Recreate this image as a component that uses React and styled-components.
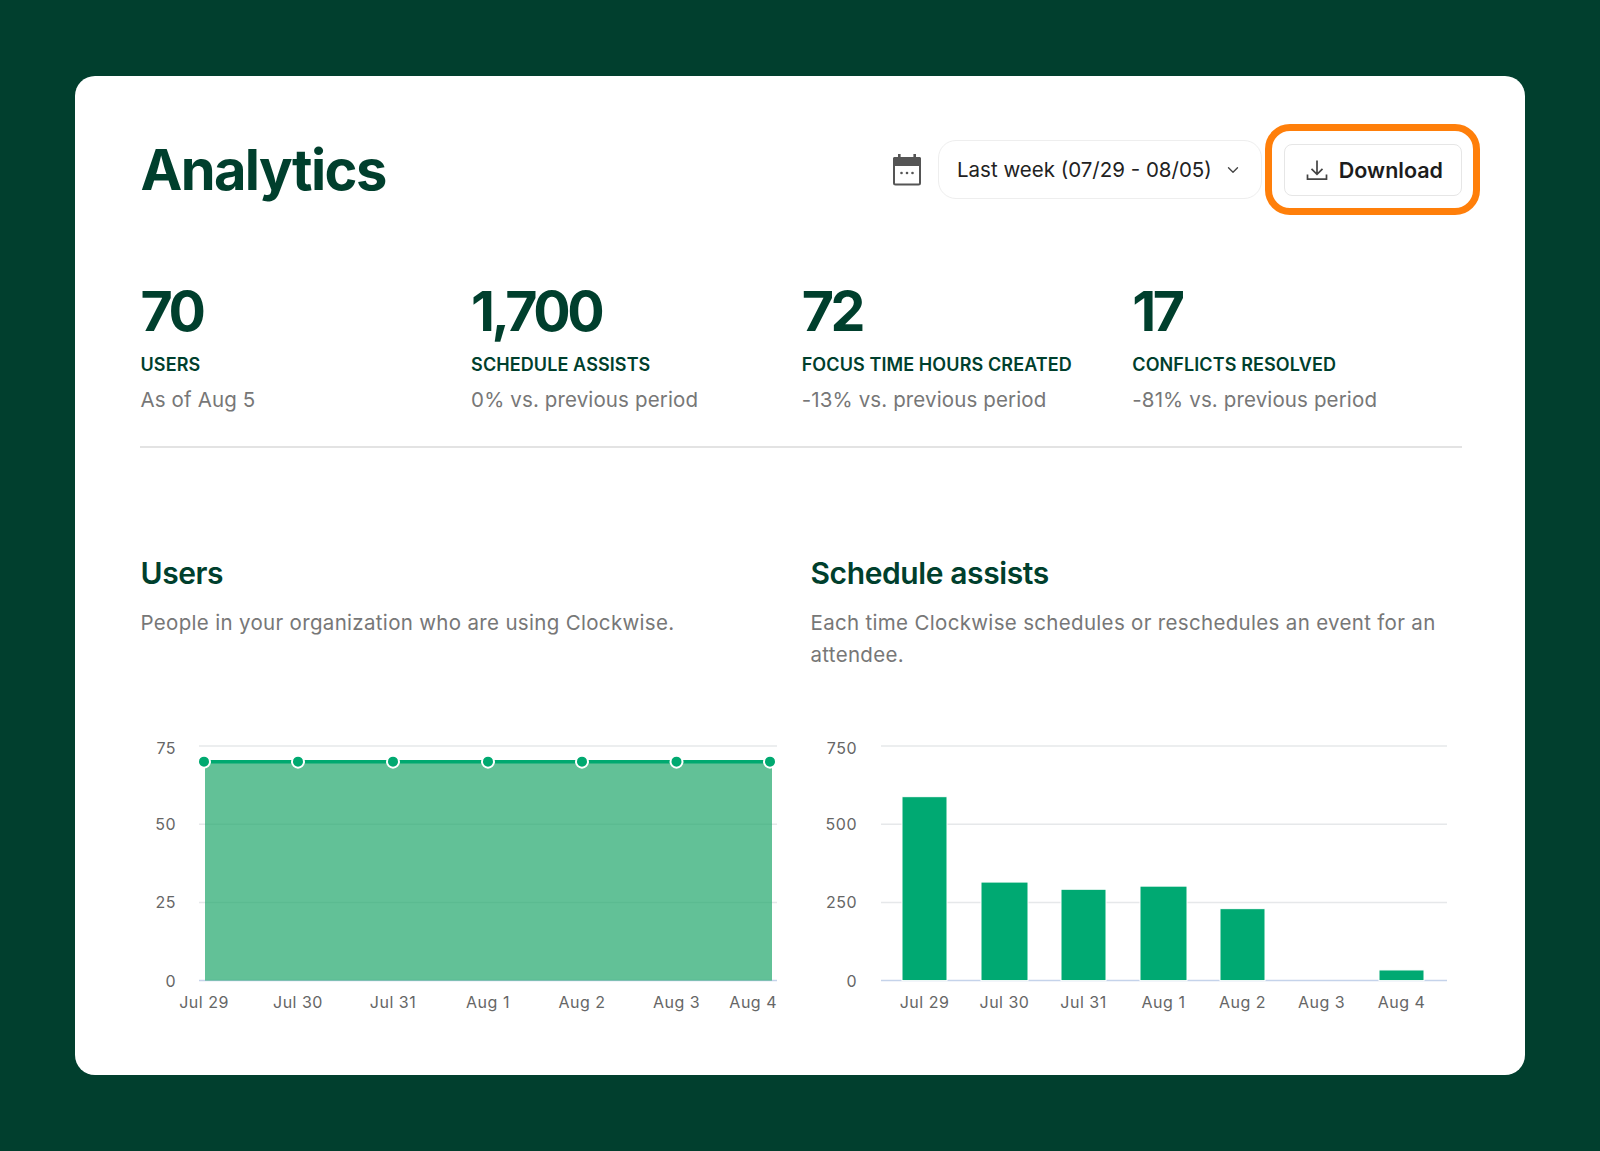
import styled, {createGlobalStyle} from "styled-components"
import {ChevronDown} from "lucide-react"

const GlobalStyle = createGlobalStyle`
  html, body {
    margin: 0;
    background: #013f2e;
    font-family: Inter, "Noto Sans", sans-serif;
  }
`

const stats = [
  {value: "70", label: "USERS", note: "As of Aug 5"},
  {value: "1,700", label: "SCHEDULE ASSISTS", note: "0% vs. previous period"},
  {value: "72", label: "FOCUS TIME HOURS CREATED", note: "-13% vs. previous period"},
  {value: "17", label: "CONFLICTS RESOLVED", note: "-81% vs. previous period"},
]

const GRID_TOP = 10
const GRID_BOTTOM = 244.6
const scaleY = (v, max) => GRID_BOTTOM - (v / max) * (GRID_BOTTOM - GRID_TOP)

const YAxis = ({ticks, max, labelX, x1, x2}) =>
  ticks.map((t) => (
    <g key={t}>
      <line
        x1={x1}
        x2={x2}
        y1={scaleY(t, max)}
        y2={scaleY(t, max)}
        stroke={t === 0 ? "#c5d3ea" : "#e6e8ea"}
        strokeWidth="1.5"
      />
      <AxisText x={labelX} y={scaleY(t, max) + (t === max ? 8 : 6)} textAnchor="end">
        {t}
      </AxisText>
    </g>
  ))

const usersX = [63, 157, 252, 347, 441, 535.5, 629]
const usersLabels = ["Jul 29", "Jul 30", "Jul 31", "Aug 1", "Aug 2", "Aug 3", "Aug 4"]

const UsersChart = () => {
  const top = scaleY(70, 75)
  return (
    <Chart $width={660} viewBox="0 0 660 290" role="img">
      <YAxis ticks={[75, 50, 25, 0]} max={75} labelX={35} x1={58} x2={636} />
      <rect x="64" y={top} width="567" height={GRID_BOTTOM - top} fill="#25a96f" fillOpacity="0.72" />
      <line x1="64" x2="631" y1={top} y2={top} stroke="#00a970" strokeWidth="3.5" />
      {usersX.map((x) => (
        <circle key={x} cx={x} cy={top} r="6" fill="#00a970" stroke="#fff" strokeWidth="2" />
      ))}
      {usersLabels.map((l, i) => (
        <AxisText key={l} x={i === 6 ? 636 : usersX[i]} y={272} textAnchor={i === 6 ? "end" : "middle"}>
          {l}
        </AxisText>
      ))}
    </Chart>
  )
}

const assists = [
  {x: 91, w: 45, v: 588, l: "Jul 29"},
  {x: 170, w: 47, v: 315, l: "Jul 30"},
  {x: 250, w: 45, v: 292, l: "Jul 31"},
  {x: 329, w: 47, v: 302, l: "Aug 1"},
  {x: 409, w: 45, v: 230, l: "Aug 2"},
  {x: 488, w: 45, v: 0, l: "Aug 3"},
  {x: 568, w: 45, v: 34, l: "Aug 4"},
]

const AssistsChart = () => (
  <Chart $width={651} viewBox="0 0 651 290" role="img">
    <YAxis ticks={[750, 500, 250, 0]} max={750} labelX={46} x1={70} x2={636} />
    {assists.map((b) => (
      <g key={b.l}>
        {b.v > 0 && (
          <rect
            x={b.x}
            y={scaleY(b.v, 750)}
            width={b.w}
            height={GRID_BOTTOM - scaleY(b.v, 750)}
            fill="#00a972"
            stroke="#fff"
            strokeWidth="1"
          />
        )}
        <AxisText x={b.x + b.w / 2} y={272} textAnchor="middle">
          {b.l}
        </AxisText>
      </g>
    ))}
  </Chart>
)

const CalendarIcon = () => (
  <svg width="30" height="32" viewBox="0 0 30 32">
    <rect x="6" y="0" width="2.6" height="5" fill="#555" />
    <rect x="21.4" y="0" width="2.6" height="5" fill="#555" />
    <path d="M2.5 3h25A1.5 1.5 0 0 1 29 4.5V12H1V4.5A1.5 1.5 0 0 1 2.5 3z" fill="#555" />
    <rect x="2" y="4" width="26" height="26.5" rx="1.5" fill="none" stroke="#555" strokeWidth="2" />
    <circle cx="9.5" cy="19" r="1.3" fill="#555" />
    <circle cx="15" cy="19" r="1.3" fill="#555" />
    <circle cx="20.5" cy="19" r="1.3" fill="#555" />
  </svg>
)

const DownloadIcon = () => (
  <svg width="22" height="22" viewBox="0 0 22 22" fill="none" stroke="#444" strokeWidth="1.7">
    <path d="M11 1.5v13.5M5.5 9.8l5.5 5.5 5.5-5.5" />
    <path d="M1.5 15.5v4.7h19v-4.7" />
  </svg>
)

export default function App() {
  return (
    <>
      <GlobalStyle />
      <Page>
        <Card>
          <Header>
            <Title>Analytics</Title>
            <Controls>
              <CalendarIcon />
              <RangeSelect>
                Last week (07/29 - 08/05)
                <ChevronDown size={18} strokeWidth={1.8} color="#444" />
              </RangeSelect>
              <DownloadButton>
                <DownloadIcon />
                Download
                <Highlight />
              </DownloadButton>
            </Controls>
          </Header>
          <StatsRow>
            {stats.map((s) => (
              <Stat key={s.label}>
                <StatValue>{s.value}</StatValue>
                <StatLabel>{s.label}</StatLabel>
                <StatNote>{s.note}</StatNote>
              </Stat>
            ))}
          </StatsRow>
          <ChartsRow>
            <Section>
              <SectionTitle>Users</SectionTitle>
              <SectionText>People in your organization who are using Clockwise.</SectionText>
              <UsersChart />
            </Section>
            <Section>
              <SectionTitle>Schedule assists</SectionTitle>
              <SectionText>
                Each time Clockwise schedules or reschedules an event for an attendee.
              </SectionText>
              <AssistsChart />
            </Section>
          </ChartsRow>
        </Card>
      </Page>
    </>
  )
}

const Page = styled.div`
  min-height: 1151px;
  box-sizing: border-box;
  padding: 76px 75px 76px 75.4px;
`

const Card = styled.main`
  box-sizing: border-box;
  height: 999px;
  background: #fff;
  border-radius: 20px;
  padding: 64px 63px 0 65.1px;
`

const Header = styled.header`
  display: flex;
  align-items: center;
  justify-content: space-between;
  height: 59px;
`

const Title = styled.h1`
  margin: 0;
  font-size: 56px;
  font-weight: 700;
  letter-spacing: -1.6px;
  color: #003f2d;
`

const Controls = styled.div`
  display: flex;
  align-items: center;
`

const RangeSelect = styled.div`
  box-sizing: border-box;
  width: 324px;
  height: 59px;
  margin-left: 16px;
  padding: 0 19px 0 18px;
  display: flex;
  align-items: center;
  justify-content: space-between;
  border: 1px solid #eeeeee;
  border-radius: 18px;
  font-size: 20.5px;
  letter-spacing: 0;
  color: #222;
`

const DownloadButton = styled.button`
  position: relative;
  box-sizing: border-box;
  width: 178px;
  height: 52px;
  margin-left: 22px;
  padding: 0 18px 0 21px;
  display: flex;
  align-items: center;
  justify-content: space-between;
  background: #fff;
  border: 1px solid #e6e6e6;
  border-radius: 8px;
  font-family: inherit;
  font-size: 21.5px;
  font-weight: 600;
  color: #1c1c1c;
`

const Highlight = styled.span`
  position: absolute;
  left: -20px;
  right: -19px;
  top: -21px;
  bottom: -20px;
  border: 7px solid #ff7f0a;
  border-radius: 25px;
`

const StatsRow = styled.section`
  display: grid;
  grid-template-columns: repeat(4, 330.6px);
  margin-top: 81px;
  padding-bottom: 30px;
  border-bottom: 2px solid #e3e3e3;
`

const Stat = styled.div`
  display: flex;
  flex-direction: column;
`

const StatValue = styled.div`
  margin-top: 1px;
  font-size: 55.5px;
  line-height: 60px;
  font-weight: 700;
  letter-spacing: -3.4px;
  color: #003f2d;
`

const StatLabel = styled.div`
  margin-top: 12px;
  font-size: 18px;
  line-height: 24px;
  font-weight: 600;
  letter-spacing: 0.1px;
  color: #003f2d;
`

const StatNote = styled.div`
  margin-top: 7px;
  font-size: 20.5px;
  line-height: 32px;
  letter-spacing: 0.13px;
  color: #777;
`

const ChartsRow = styled.section`
  display: grid;
  grid-template-columns: 670px 651px;
  margin-top: 107px;
`

const Section = styled.div`
  display: flex;
  flex-direction: column;
`

const SectionTitle = styled.h2`
  margin: 0;
  font-size: 30px;
  line-height: 36px;
  font-weight: 600;
  letter-spacing: -0.4px;
  color: #003f2d;
`

const SectionText = styled.p`
  margin: 16px 0 0;
  width: 640px;
  min-height: 64px;
  font-size: 20.5px;
  line-height: 32px;
  letter-spacing: 0.32px;
  color: #777;
`

const Chart = styled.svg`
  display: block;
  margin: 64.5px 0 0 1px;
  width: ${(p) => p.$width}px;
  height: 290px;
`

const AxisText = styled.text`
  font-family: Inter, sans-serif;
  font-size: 16px;
  letter-spacing: 0.5px;
  fill: #666;
`
